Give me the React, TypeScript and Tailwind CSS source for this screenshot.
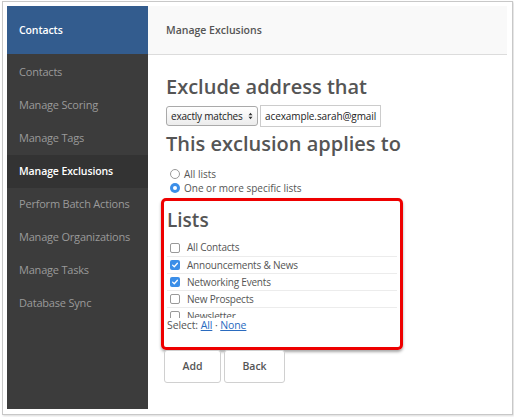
import React from "react";

const NAV = [
  "Contacts",
  "Manage Scoring",
  "Manage Tags",
  "Manage Exclusions",
  "Perform Batch Actions",
  "Manage Organizations",
  "Manage Tasks",
  "Database Sync",
];

const LISTS = [
  { name: "All Contacts", checked: false },
  { name: "Announcements & News", checked: true },
  { name: "Networking Events", checked: true },
  { name: "New Prospects", checked: false },
  { name: "Newsletter", checked: false },
];

function Checkbox({ checked }: { checked: boolean }) {
  if (checked) {
    return (
      <span className="flex size-[10px] items-center justify-center rounded-[2px] bg-[#3b8ee8]">
        <svg viewBox="0 0 10 10" className="size-[8px]">
          <path d="M2 5.2 L4.1 7.2 L8 2.8" fill="none" stroke="white" strokeWidth="1.6" strokeLinecap="round" strokeLinejoin="round" />
        </svg>
      </span>
    );
  }
  return <span className="size-[10px] rounded-[2px] border border-[#999] bg-white" />;
}

function Radio({ checked }: { checked: boolean }) {
  return checked ? (
    <span className="flex size-[10px] items-center justify-center rounded-full bg-[#3b8ee8]">
      <span className="size-[4px] rounded-full bg-white" />
    </span>
  ) : (
    <span className="size-[10px] rounded-full border border-[#999] bg-white" />
  );
}

export default function App() {
  return (
    <div className="h-[417px] w-[514px] bg-white pl-[2px] pt-[1px] font-['Open_Sans',sans-serif]">
      <div className="h-[414px] w-[511px] border border-[#c8c8c8] pl-[4px] pt-[4px] shadow-[1px_1px_2px_rgba(0,0,0,0.15)]">
        <div className="flex h-[403px] w-[500px]">
          {/* sidebar */}
          <aside className="flex w-[141px] flex-col bg-[#3c3c3c]">
            <div className="flex h-[48px] items-center bg-[#335c8e] pl-[12px] pt-[2px] text-[10.5px] font-semibold tracking-[-0.1px] text-white">
              Contacts
            </div>
            <nav className="pt-[2px]">
              {NAV.map((item) => {
                const active = item === "Manage Exclusions";
                return (
                  <div
                    key={item}
                    className={
                      active
                        ? "flex h-[33px] items-center bg-[#333333] pl-[12px] text-[10.5px] font-semibold tracking-[-0.1px] text-white"
                        : "flex h-[33px] items-center pl-[12px] text-[11px] tracking-[-0.2px] text-[#9a9a9a]"
                    }
                  >
                    {item}
                  </div>
                );
              })}
            </nav>
          </aside>

          {/* main */}
          <main className="flex flex-1 flex-col">
            <div className="flex h-[49px] items-center border-b border-[#dcdcdc] bg-[#f9f9f9] pl-[18px] pt-[2px] text-[10.5px] font-semibold text-[#555]">
              Manage Exclusions
            </div>
            <div className="pl-[13px] pt-[18px] text-[#555]">
              <h1 className="pl-[5px] text-[20px] font-semibold leading-[28px]">Exclude address that</h1>
              <div className="mt-[4px] flex items-center gap-[2px] pl-[5px]">
                <div className="flex h-[20px] w-[92px] items-center justify-between whitespace-nowrap rounded-[3px] border border-[#aaa] bg-gradient-to-b from-white to-[#ececec] px-[4px] text-[10px] tracking-[-0.2px] text-[#222]">
                  <span>exactly matches</span>
                  <svg viewBox="0 0 6 10" className="h-[8px] w-[5px] shrink-0">
                    <path d="M0.5 4 L3 1 L5.5 4 Z M0.5 6 L3 9 L5.5 6 Z" fill="#333" />
                  </svg>
                </div>
                <div className="flex h-[22px] w-[121px] items-center whitespace-nowrap border border-[#ccc] bg-white pl-[4px] text-[10px] tracking-[-0.1px] text-[#222]">
                  acexample.sarah@gmail
                </div>
              </div>
              <h2 className="mt-[3px] pl-[5px] text-[20px] font-semibold leading-[28px]">This exclusion applies to</h2>
              <div className="mt-[9px] pl-[9px] text-[10px] leading-[14px]">
                <div className="flex items-center gap-[4px]">
                  <Radio checked={false} />
                  <span>All lists</span>
                </div>
                <div className="flex items-center gap-[4px]">
                  <Radio checked={true} />
                  <span>One or more specific lists</span>
                </div>
              </div>

              <div className="mt-[3px] h-[152px] w-[242px] rounded-[5px] border-[3px] border-[#ee0000] pl-[3px] pr-[3px] shadow-[0_2px_3px_rgba(0,0,0,0.35)]">
                <h3 className="pt-[6px] text-[19px] font-semibold leading-[26px]">Lists</h3>
                <div className="mt-[6px] h-[79px] overflow-hidden">
                  {LISTS.map((l, i) => (
                    <div
                      key={l.name}
                      className={
                        i === 0
                          ? "flex h-[17px] items-center gap-[7px] pl-[3px] text-[10px] tracking-[-0.2px]"
                          : "flex h-[17px] items-center gap-[7px] border-t border-[#ececec] pl-[3px] text-[10px] tracking-[-0.2px]"
                      }
                    >
                      <Checkbox checked={l.checked} />
                      <span>{l.name}</span>
                    </div>
                  ))}
                </div>
                <div className="text-[10.5px] leading-[14px] tracking-[-0.1px]">
                  Select: <a className="text-[#2a6bbf] underline">All</a> · <a className="text-[#2a6bbf] underline">None</a>
                </div>
              </div>

              <div className="flex gap-[3px] pl-[3px]">
                <button className="h-[33px] w-[57px] rounded-[3px] border border-[#d0d0d0] bg-white text-[10.5px] font-semibold text-[#555]">
                  Add
                </button>
                <button className="h-[33px] w-[61px] rounded-[3px] border border-[#d0d0d0] bg-white text-[10.5px] font-semibold text-[#555]">
                  Back
                </button>
              </div>
            </div>
          </main>
        </div>
      </div>
    </div>
  );
}
